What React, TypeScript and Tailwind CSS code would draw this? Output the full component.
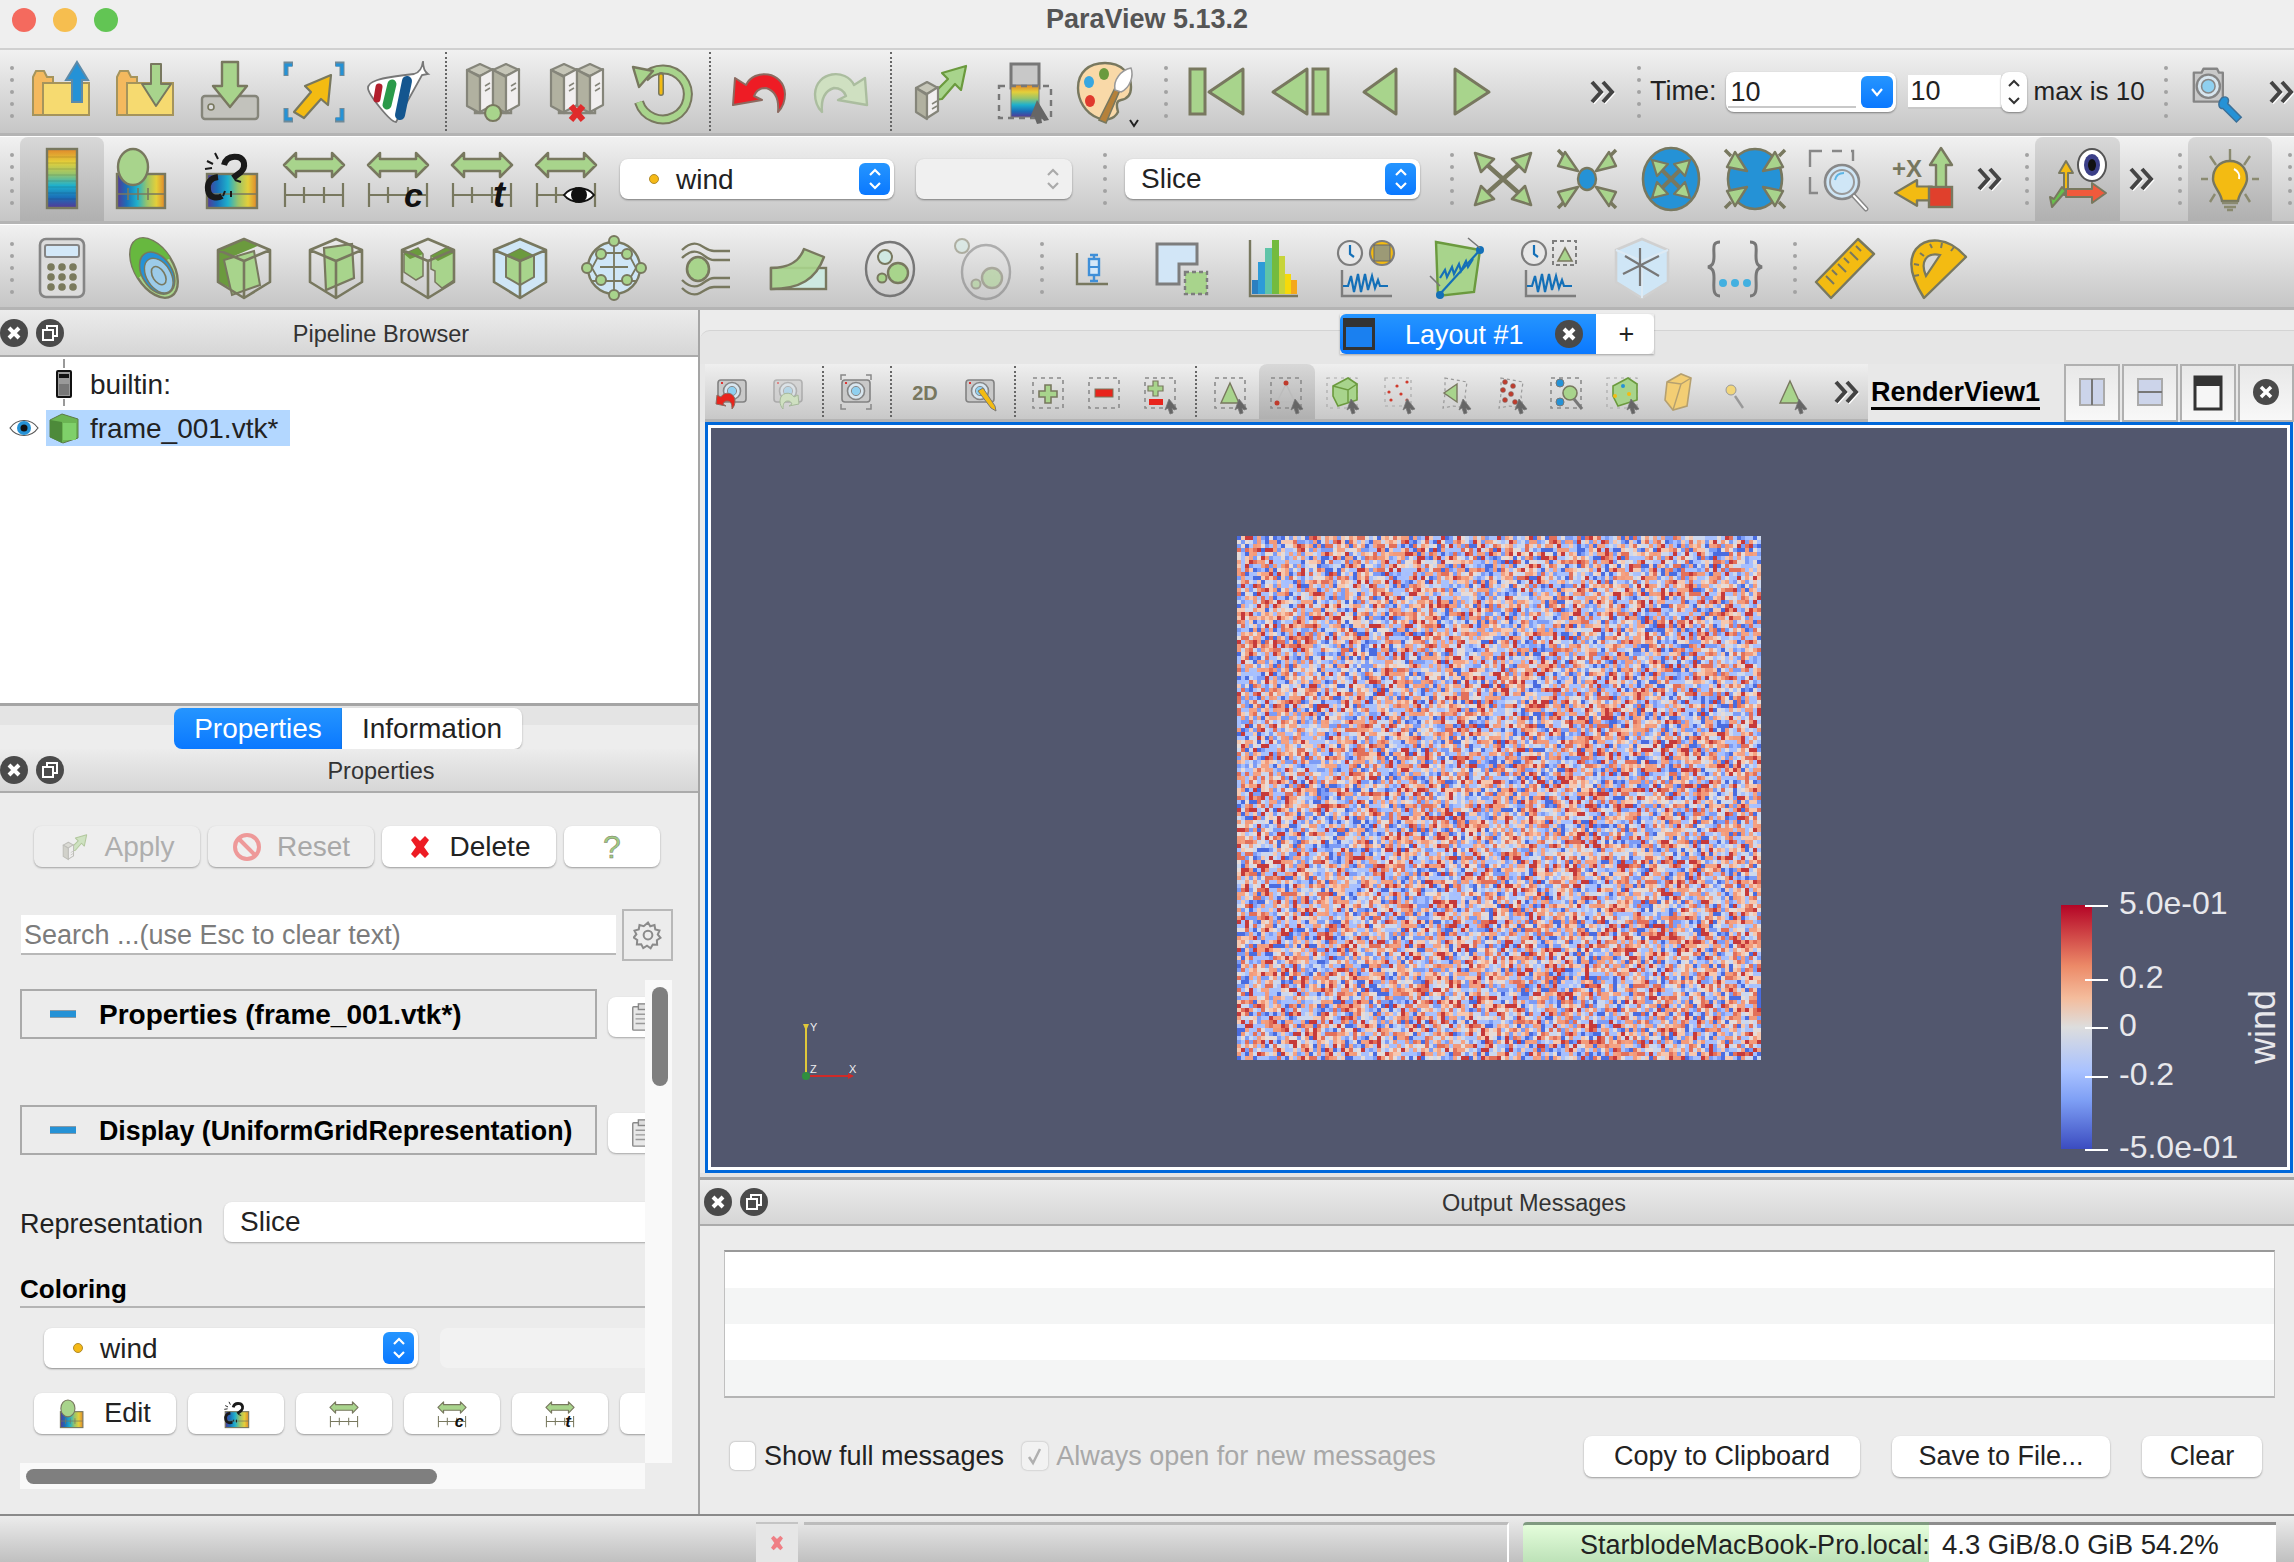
import { useMemo, type ReactNode } from "react";

const S = "#78785f";
const G = "#a8d48c";
const DG = "#6b9a3e";
const B = "#2592d6";
const Y = "#f3bb12";

function Tower({ x, y, h = 36, w = 13 }: { x: number; y: number; h?: number; w?: number }) {
  return (
    <g stroke="#85857a" strokeWidth="2.2" strokeLinejoin="round">
      <path d={`M${x} ${y + 6}l${w}-6 ${w} 6-${w} 6z`} fill="#c6c6b8" />
      <path d={`M${x} ${y + 6}v${h}l${w} 7v-${h}z`} fill="#b1b1a0" />
      <path d={`M${x + w} ${y + 12}v${h}l${w}-7v-${h}z`} fill="#f1efef" />
      <path d={`M${x + w + 5} ${y + 22}l5-3M${x + w + 5} ${y + 27}l5-3`} strokeWidth="1.5" />
    </g>
  );
}

const RangeBar = ({ children }: { children?: ReactNode }) => (
  <>
    <path d="M2 18 14 6v6h36V6l12 12-12 12v-6H14v6z" fill={G} stroke={S} strokeWidth="2.5" strokeLinejoin="round" />
    <path d="M3 36v24M61 36v24M3 48h58M22 40v16M42 40v16" fill="none" stroke={S} strokeWidth="2.2" />
    {children}
  </>
);

const Hex = ({ children }: { children?: ReactNode }) => (
  <>
    {children}
    <path d="M4 14 30 3l26 11v32L30 62 4 46zM4 14l26 11 26-11M30 25v37" fill="none" stroke={S} strokeWidth="2.6" strokeLinejoin="round" />
  </>
);

const Camera = ({ o = 1 }: { o?: number }) => (
  <g opacity={o}>
    <rect x="5" y="8" width="28" height="22" rx="3" fill="#c9c9c9" stroke="#828282" strokeWidth="1.6" />
    <circle cx="19" cy="19" r="8.5" fill="#d8e6ef" stroke="#858585" strokeWidth="1.6" />
    <circle cx="19" cy="19" r="4.6" fill="#8fd0f0" stroke="#8a8a8a" />
    <rect x="8" y="10" width="2" height="2" fill="#d33" />
  </g>
);

const Dash = () => <rect x="4" y="6" width="30" height="30" fill="none" stroke="#8b8b8b" strokeWidth="1.6" strokeDasharray="4 4" />;
const Cursor = () => <path d="M28 27l8 10-3 1-2-2 1 5-3 1-2-6-3 2z" fill="#666" stroke="#777" strokeWidth=".8" />;

const big: Record<string, ReactNode> = {
  folderUp: (
    <>
      <path d="M3 55V17l3-6h8l3 6h6v38z" fill="#f4b95e" stroke="#a5945c" strokeWidth="2" />
      <rect x="13" y="23" width="46" height="32" fill="#f6da70" stroke="#a5945c" strokeWidth="2" />
      <path d="M47 2l11 18h-6v22h-10V20h-6z" fill={B} stroke="#5d8aa8" strokeWidth="2" />
    </>
  ),
  folderDown: (
    <>
      <path d="M3 55V17l3-6h8l3 6h6v38z" fill="#f4b95e" stroke="#a5945c" strokeWidth="2" />
      <rect x="13" y="23" width="46" height="32" fill="#f6da70" stroke="#a5945c" strokeWidth="2" />
      <path d="M37 4h10v20h10L42 46 28 24h9z" fill={G} stroke={S} strokeWidth="2" strokeLinejoin="round" />
    </>
  ),
  save: (
    <>
      <rect x="4" y="36" width="56" height="23" rx="3" fill="#c2c2bc" stroke="#85857a" strokeWidth="2.4" />
      <circle cx="13" cy="47" r="3" fill="#ddd" stroke={S} strokeWidth="1.6" />
      <path d="M24 2h16v24h9L32 47 15 26h9z" fill={G} stroke={S} strokeWidth="2.4" strokeLinejoin="round" />
    </>
  ),
  connectArrow: (
    <>
      <path d="M4 16V4h7M60 16V4h-7M4 48v12h7M60 48v12h-7" fill="none" stroke="#708a98" strokeWidth="5" />
      <path d="M4 15V5h6M60 15V5h-6M4 49v10h6M60 49v10h-6" fill="none" stroke={B} strokeWidth="3" />
      <path d="M49 15 23 26l6 6-17 20 10 6 17-19 7 6z" fill={Y} stroke={S} strokeWidth="2.2" strokeLinejoin="round" />
    </>
  ),
  pvLogo: (
    <>
      <path d="M57 1c0 7 2 11 5 13l-6 1-26 47C24 62 2 34 2 28c0-6 8-10 46-14 4-1 8-4 9-13z" fill="#fff" stroke="#777" strokeWidth="1.8" />
      <path d="M13 27l-2 12" stroke="#b21f2d" strokeWidth="7" strokeLinecap="round" />
      <path d="M26 24l-5 21" stroke="#2a9a4a" strokeWidth="9" strokeLinecap="round" />
      <path d="M41 21l-7 34" stroke="#14568f" strokeWidth="10" strokeLinecap="round" />
    </>
  ),
  serverOn: (
    <>
      <path d="M14 44v9h36v-9" fill="none" stroke="#85857a" strokeWidth="2.4" />
      <Tower x={6} y={4} />
      <Tower x={32} y={4} />
      <circle cx="32" cy="53" r="8" fill={G} stroke={S} strokeWidth="2.2" />
    </>
  ),
  serverOff: (
    <>
      <path d="M14 44v9h36v-9" fill="none" stroke="#85857a" strokeWidth="2.4" />
      <Tower x={6} y={4} />
      <Tower x={32} y={4} />
      <path d="M26 46l12 14M38 46 26 60" stroke="#e02b2b" strokeWidth="6" />
    </>
  ),
  recover: (
    <>
      <path d="M15 18A25 25 0 1 1 10 42" fill="none" stroke={S} strokeWidth="10" />
      <path d="M15 18A25 25 0 1 1 10 42" fill="none" stroke={G} strokeWidth="6" />
      <path d="M4 7l20 4-14 16z" fill={G} stroke={S} strokeWidth="2.4" strokeLinejoin="round" />
      <path d="M32 15v18" stroke={S} strokeWidth="6" strokeLinecap="round" />
      <path d="M32 16v17" stroke={Y} strokeWidth="3" strokeLinecap="round" />
    </>
  ),
  undo: <path d="M7 45 9 18l11 7c8-17 38-14 39 9 0 8-3 14-7 18 1-11-2-21-12-24-6 0-10 3-12 8l8 4z" fill="#ee1c25" stroke="#8c6a60" strokeWidth="2" strokeLinejoin="round" />,
  redo: <path d="M57 45 55 18l-11 7C36 8 6 11 5 34c0 8 3 14 7 18-1-11 2-21 12-24 6 0 10 3 12 8l-8 4z" fill="#cfe0c1" stroke="#abbd9f" strokeWidth="2.4" strokeLinejoin="round" />,
  output: (
    <>
      <path d="M27 33 41 19l-6-6 24-7-5 24-6-6-13 15-8 1z" fill={G} stroke={DG} strokeWidth="2.2" strokeLinejoin="round" />
      <Tower x={9} y={22} h={24} w={11} />
    </>
  ),
  colorPick: (
    <>
      <rect x="20" y="4" width="28" height="24" fill="#c8c8c8" stroke="#777" strokeWidth="3" />
      <rect x="20" y="25" width="28" height="32" fill="url(#rbV)" stroke="#777" strokeWidth="1" />
      <rect x="8" y="26" width="52" height="32" fill="none" stroke="#777" strokeWidth="2.4" strokeDasharray="6 5" />
      <path d="M46 40l12 20-5 1-3-4 1 6-5 1-3-8-4 2z" fill="#666" />
    </>
  ),
  palette: (
    <>
      <path d="M30 3c16 0 26 10 26 24 0 8-4 12-10 13s-4 8-3 12c-4 8-14 9-20 6C10 53 3 40 3 28 3 12 14 3 30 3z" fill="#f9d9a8" stroke={S} strokeWidth="2.4" />
      <ellipse cx="14" cy="22" rx="5" ry="6" fill="#38a7e0" />
      <ellipse cx="29" cy="14" rx="5" ry="6" fill="#6a9a3e" />
      <ellipse cx="15" cy="41" rx="5" ry="6" fill="#e03a2d" />
      <path d="M24 60l16-32 5 2-14 33z" fill="#b5813a" stroke={S} strokeWidth="1.6" />
      <path d="M40 30c-2-10 6-20 16-22 3 8-1 20-10 24z" fill="#fff" stroke="#999" strokeWidth="1.5" />
      <path d="M55 60l4 6 4-6" fill="none" stroke="#222" strokeWidth="2" />
    </>
  ),
  first: (
    <>
      <rect x="5" y="9" width="15" height="45" fill={G} stroke={S} strokeWidth="3" />
      <path d="M58 9v45L24 32z" fill={G} stroke={S} strokeWidth="3" strokeLinejoin="round" />
    </>
  ),
  prevBar: (
    <>
      <path d="M38 9v45L4 32z" fill={G} stroke={S} strokeWidth="3" strokeLinejoin="round" />
      <rect x="44" y="9" width="15" height="45" fill={G} stroke={S} strokeWidth="3" />
    </>
  ),
  prev: <path d="M43 9v45L11 32z" fill={G} stroke={S} strokeWidth="3" strokeLinejoin="round" />,
  play: <path d="M18 9v45l34-22z" fill={G} stroke={S} strokeWidth="3" strokeLinejoin="round" />,
  shot: (
    <>
      <path d="M7 12h8l2-4h14l2 4h4v30H7z" fill="#c9c9c9" stroke="#858585" strokeWidth="2.4" strokeLinejoin="round" />
      <circle cx="22" cy="26" r="12" fill="#d8e6ef" stroke="#858585" strokeWidth="2.4" />
      <circle cx="22" cy="26" r="7" fill="#8fd0f0" stroke="#888" strokeWidth="1.6" />
      <path d="M36 38c6-3 8 2 6 6l14 14-5 5-14-14c-3 1-7-4-1-11z" fill={B} stroke="#3c7098" strokeWidth="1.5" />
    </>
  ),
  cbar: (
    <>
      <rect x="17" y="2" width="30" height="59" fill="url(#rbV)" stroke={S} strokeWidth="2.4" />
      <path d="M18 10h28M18 16h28M18 22h28M18 28h28M18 34h28M18 40h28M18 46h28M18 52h28" stroke="#0002" strokeWidth="1" />
    </>
  ),
  cedit: (
    <>
      <rect x="3" y="27" width="48" height="34" fill="url(#rbH)" stroke={S} strokeWidth="2.4" />
      <path d="M3 47h48M14 41v12M24 41v12M34 41v12" stroke={S} strokeWidth="1.6" />
      <ellipse cx="19" cy="20" rx="15" ry="18" fill={G} stroke={S} strokeWidth="2.4" />
    </>
  ),
  cunlink: (
    <>
      <rect x="9" y="27" width="50" height="34" fill="url(#rbH)" stroke={S} strokeWidth="2.4" />
      <path d="M9 47h50" stroke={S} strokeWidth="1.6" />
      <path d="M20 30c-8 1-11 6-10 13 1 8 9 9 14 6M26 18c2-8 8-9 14-8 7 2 8 10 3 15l-8 6" fill="none" stroke="#1a1a1a" strokeWidth="6" />
      <path d="M17 6l3 6M9 14l6 3M7 22l7-1M37 33l6 2M33 44v6M27 44l-2 5" stroke="#1a1a1a" strokeWidth="2" />
    </>
  ),
  range: <RangeBar />,
  rangeC: (
    <RangeBar>
      <text x="38" y="60" fontFamily="Liberation Sans, sans-serif" fontSize="34" fontWeight="700" fontStyle="italic" fill="#111">c</text>
    </RangeBar>
  ),
  rangeT: (
    <RangeBar>
      <text x="43" y="60" fontFamily="Liberation Sans, sans-serif" fontSize="36" fontWeight="700" fontStyle="italic" fill="#111">t</text>
    </RangeBar>
  ),
  rangeE: (
    <RangeBar>
      <path d="M30 48c7-9 23-9 30 0-7 9-23 9-30 0z" fill="#fff" stroke="#111" strokeWidth="2" />
      <circle cx="45" cy="48" r="8" fill="#111" />
    </RangeBar>
  ),
  rs1: (
    <>
      <path d="M14 16l36 32M50 16 14 48" stroke={S} strokeWidth="4.5" />
      <g fill={G} stroke={S} strokeWidth="2.5" strokeLinejoin="round">
        <path d="M4 6l19 6-13 13zM60 6 41 12l13 13zM4 58l19-6-13-13zM60 58 41 52l13-13z" />
      </g>
    </>
  ),
  rs2: (
    <>
      <path d="M3 3l6 6M61 3l-6 6M3 61l6-6M61 61l-6-6" stroke={S} strokeWidth="3.5" />
      <ellipse cx="32" cy="32" rx="9" ry="11" fill={B} stroke={S} strokeWidth="2.4" />
      <g fill={G} stroke={S} strokeWidth="2.4" strokeLinejoin="round">
        <path d="M23 24 10 5 3 19zM41 24 54 5l7 14zM23 40 10 59 3 45zM41 40l13 19 7-14z" />
      </g>
    </>
  ),
  rs3: (
    <>
      <ellipse cx="32" cy="32" rx="28" ry="31" fill={B} stroke={S} strokeWidth="2.6" />
      <path d="M20 20l24 24M44 20 20 44" stroke={S} strokeWidth="4" />
      <g fill={G} stroke={S} strokeWidth="2.2" strokeLinejoin="round">
        <path d="M13 13l16 4-11 12zM51 13l-16 4 11 12zM13 51l16-4-11-12zM51 51l-16-4 11-12z" />
      </g>
    </>
  ),
  rs4: (
    <>
      <ellipse cx="32" cy="32" rx="27" ry="30" fill={B} stroke={S} strokeWidth="2.6" />
      <path d="M2 3l6 6M62 3l-6 6M2 61l6-6M62 61l-6-6" stroke={S} strokeWidth="3.5" />
      <g fill={G} stroke={S} strokeWidth="2.4" strokeLinejoin="round">
        <path d="M24 24 12 5 4 20zM40 24 52 5l8 15zM24 40 12 59 4 44zM40 40l12 19 8-15z" />
      </g>
    </>
  ),
  zoomBox: (
    <>
      <path d="M3 20V4h12M25 4h10M44 4h2v10M3 30v16h8" fill="none" stroke="#888" strokeWidth="2.4" />
      <circle cx="35" cy="35" r="17" fill="#cfe6f6" stroke="#888" strokeWidth="2.6" />
      <circle cx="35" cy="35" r="12" fill="#cfe6f6" stroke="#999" strokeWidth="2" />
      <path d="M28 33c1-5 5-7 9-7" fill="none" stroke="#5db5e5" strokeWidth="2" />
      <path d="M47 49l12 13" stroke="#888" strokeWidth="5" strokeLinecap="round" />
      <path d="M47 49l12 13" stroke="#fff" strokeWidth="2" strokeLinecap="round" />
    </>
  ),
  axes: (
    <>
      <text x="1" y="30" fontFamily="Liberation Sans, sans-serif" fontSize="24" fontWeight="700" fill="#77775f">+X</text>
      <path d="M45 41V18h-6L50 1l11 17h-6v23z" fill={G} stroke={S} strokeWidth="2.4" strokeLinejoin="round" />
      <path d="M41 59H26v6L4 51l22-14v7h15z" fill={Y} stroke={S} strokeWidth="2.4" strokeLinejoin="round" transform="translate(0 -1) scale(1 .92)" />
      <rect x="38" y="40" width="23" height="20" fill="#e0402c" stroke={S} strokeWidth="2.4" />
    </>
  ),
  axesEye: (
    <>
      <path d="M18 48V26h-5l7-12 7 12h-5v22z" fill={Y} stroke={S} strokeWidth="2" strokeLinejoin="round" />
      <path d="M20 42h26v-6l14 10-14 10v-6H20z" fill="#f05a3c" stroke={S} strokeWidth="2" strokeLinejoin="round" />
      <path d="M20 44 6 60l-2-10 4 2 8-12z" fill="#68c04c" stroke={S} strokeWidth="2" strokeLinejoin="round" />
      <ellipse cx="46" cy="18" rx="14" ry="16" fill="#fff" stroke="#555" strokeWidth="2" />
      <ellipse cx="46" cy="18" rx="8" ry="11" fill="#3b3f88" />
      <ellipse cx="46" cy="18" rx="4" ry="6" fill="#111" />
    </>
  ),
  bulb: (
    <>
      <path d="M32 2v12M12 9l6 9M52 9l-6 9M3 32h7M54 32h7M12 55l5-8M52 55l-5-8" stroke="#8a8a70" strokeWidth="2.4" />
      <path d="M32 14c-11 0-17 8-17 18 0 8 8 13 9 22h16c1-9 9-14 9-22 0-10-6-18-17-18z" fill={Y} stroke={S} strokeWidth="2.4" />
      <path d="M24 56h16M26 60h12M29 63h6" stroke="#8a8a70" strokeWidth="2.4" />
      <path d="M36 22c4 2 6 6 5 10" stroke="#fff" strokeWidth="2" fill="none" />
    </>
  ),
  calc: (
    <>
      <rect x="10" y="3" width="44" height="58" rx="6" fill="#dcdcdc" stroke="#858585" strokeWidth="2.6" />
      <rect x="15" y="9" width="34" height="12" rx="2" fill="#d3e8f8" stroke="#858585" strokeWidth="2" />
      {[31, 41, 51].flatMap((cy) =>
        [21, 32, 43].map((cx) => <circle key={`${cx}${cy}`} cx={cx} cy={cy} r="3.8" fill="#7a7a5c" />),
      )}
    </>
  ),
  contour: (
    <g transform="rotate(-32 32 32)">
      <ellipse cx="32" cy="32" rx="19" ry="33" fill={G} stroke={S} strokeWidth="2.4" />
      <path d="M13 32C13 14 22-1 32-1s19 15 19 33z" fill="#67b83f" stroke="none" />
      <ellipse cx="32" cy="38" rx="15" ry="23" fill={B} stroke={S} strokeWidth="1.6" />
      <ellipse cx="32" cy="41" rx="12" ry="19" fill="#9ccbe9" stroke={S} strokeWidth="1.4" />
      <ellipse cx="32" cy="41" rx="6" ry="10" fill="none" stroke={S} strokeWidth="1.6" />
    </g>
  ),
  clip: (
    <Hex>
      <path d="M4 14 30 3l16 6-26 11 4 36-20-10z" fill={DG} />
      <path d="M10 24l30-9 6 34-28 10z" fill={G} stroke={S} strokeWidth="2" />
    </Hex>
  ),
  slice: (
    <Hex>
      <path d="M18 12l28-4 2 34-28 12z" fill={G} stroke={S} strokeWidth="2.2" />
    </Hex>
  ),
  extract: (
    <Hex>
      <path d="M6 18l14-6 5 6v22l-7 4-12-8z" fill={G} stroke={S} strokeWidth="1.5" />
      <path d="M33 20l17-9 6 6v27l-12 8-7-6V35l-4-2z" fill={G} stroke={S} strokeWidth="1.5" />
      <path d="M6 18l14-6 5 6-13 5zM33 20l17-9 6 6-16 8z" fill={DG} />
    </Hex>
  ),
  threshold: (
    <>
      <path d="M4 14 30 3l26 11v32L30 62 4 46z" fill="#cfe6f6" />
      <Hex>
        <path d="M16 20l14-7 14 7v21l-14 8-14-8z" fill={G} stroke={S} strokeWidth="2" />
        <path d="M16 20l14-7 14 7-14 6z" fill={DG} />
      </Hex>
    </>
  ),
  glyph: (
    <>
      <circle cx="32" cy="32" r="26" fill="#cfe6f6" stroke={S} strokeWidth="2.4" />
      <path d="M14 17h36M9 45h46M32 5v54M18 17 10 32l8 14M46 17l8 15-8 14M18 31h28" stroke={S} strokeWidth="1.8" fill="none" />
      {[[32, 5], [32, 59], [5, 32], [59, 32], [19, 18], [45, 18], [19, 44], [45, 44]].map(([x, y]) => (
        <circle key={`${x}-${y}`} cx={x} cy={y} r="5" fill={G} stroke={S} strokeWidth="2" />
      ))}
    </>
  ),
  stream: (
    <>
      <ellipse cx="24" cy="33" rx="11" ry="12" fill={G} stroke={S} strokeWidth="2.6" />
      <path d="M8 14C14 8 20 6 26 9S34 15 40 15H56M8 22C14 16 20 14 26 17S34 24 40 24H56M8 52C14 58 20 60 26 57S34 51 40 51H56M8 44C14 50 20 52 26 49S34 42 40 42H56" fill="none" stroke={S} strokeWidth="2.4" />
    </>
  ),
  warp: (
    <>
      <rect x="5" y="32" width="55" height="21" fill="#cde9e0" stroke={S} strokeWidth="2.4" />
      <path d="M5 32c18 0 28-6 33-19l20 8c-8 22-24 32-53 32z" fill={G} fillOpacity=".9" stroke={S} strokeWidth="2.4" strokeLinejoin="round" />
    </>
  ),
  group: (
    <>
      <ellipse cx="32" cy="33" rx="24" ry="27" fill="none" stroke="#777" strokeWidth="2.4" />
      <circle cx="27" cy="21" r="7" fill="#cfe9e2" stroke={S} strokeWidth="2" />
      <circle cx="40" cy="37" r="10" fill={G} stroke={S} strokeWidth="2.4" />
      <circle cx="24" cy="42" r="4.5" fill={G} stroke={S} strokeWidth="2" />
    </>
  ),
  ungroup: (
    <g opacity=".5">
      <ellipse cx="36" cy="36" rx="24" ry="27" fill="none" stroke="#777" strokeWidth="2.4" />
      <circle cx="12" cy="10" r="7" fill="#cfe9e2" stroke={S} strokeWidth="2" />
      <circle cx="42" cy="42" r="10" fill={G} stroke={S} strokeWidth="2.4" />
      <circle cx="26" cy="48" r="4.5" fill={G} stroke={S} strokeWidth="2" />
    </g>
  ),
  probe: (
    <>
      <path d="M17 17v31h31" fill="none" stroke={S} strokeWidth="2.4" />
      <path d="M34 19v26M30 19h8M30 45h8" stroke="#3f8fd8" strokeWidth="2.4" />
      <rect x="29" y="23" width="10" height="16" fill="#d5e8f8" stroke="#3f8fd8" strokeWidth="2.4" />
      <path d="M29 31h10" stroke="#3f8fd8" strokeWidth="2" />
    </>
  ),
  selectData: (
    <>
      <path d="M5 8h40v20H27v20H5z" fill="#d2e6f7" stroke="#7d7d7d" strokeWidth="3" />
      <rect x="33" y="36" width="22" height="22" fill={G} stroke="#7d7d7d" strokeWidth="2.4" strokeDasharray="4 3" />
    </>
  ),
  histo: (
    <>
      <rect x="8" y="44" width="6" height="14" fill="#2b7fc0" />
      <rect x="14" y="26" width="7" height="32" fill="#2d9bd8" />
      <rect x="21" y="12" width="7" height="46" fill="#5fc4a8" />
      <rect x="28" y="4" width="7" height="54" fill="#74bb3e" />
      <rect x="35" y="20" width="6" height="38" fill="#c7d43a" />
      <rect x="41" y="38" width="6" height="20" fill="#f6d90a" />
      <rect x="47" y="44" width="6" height="14" fill="#f4a81c" />
      <path d="M6 4v56h48" fill="none" stroke={S} strokeWidth="2.4" />
    </>
  ),
  timePlot: (
    <>
      <circle cx="14" cy="17" r="12" fill="#e8e8e8" stroke="#7d7d7d" strokeWidth="2.2" />
      <path d="M14 9v9l4 3" fill="none" stroke="#1470b8" strokeWidth="2.2" />
      <circle cx="46" cy="17" r="12" fill={Y} stroke="#7d7d7d" strokeWidth="2.2" />
      <rect x="38" y="9" width="16" height="16" fill="#9c9a76" stroke="#666" />
      <path d="M6 34v26h50" fill="none" stroke="#7d7d7d" strokeWidth="2.4" />
      <path d="M7 50h5l3-10 3 16 4-18 3 18 4-18 3 16 4-14 3 12 3-8 2 6h8" fill="none" stroke="#1470b8" strokeWidth="2.2" />
    </>
  ),
  plotLine: (
    <>
      <path d="M8 6 52 14 46 56 10 60z" fill={G} stroke={DG} strokeWidth="2.4" />
      <path d="M12 58 52 14" stroke="#1470b8" strokeWidth="2.2" />
      <circle cx="52" cy="14" r="4" fill="#1470b8" />
      <circle cx="12" cy="59" r="4" fill="#1470b8" />
      <path d="M40 2l12 10M2 40l10 10" stroke="#777" strokeWidth="1.6" />
      <path d="M12 42l5-8 2 7 5-10 2 7 5-10 2 7 5-10 2 6 5-8" fill="none" stroke="#1470b8" strokeWidth="2.2" />
    </>
  ),
  timeSel: (
    <>
      <circle cx="14" cy="17" r="12" fill="#e8e8e8" stroke="#7d7d7d" strokeWidth="2.2" />
      <path d="M14 9v9l4 3" fill="none" stroke="#1470b8" strokeWidth="2.2" />
      <rect x="33" y="5" width="23" height="24" fill="none" stroke="#7d7d7d" strokeWidth="2" strokeDasharray="4 3" />
      <path d="M38 25l7-13 7 13z" fill={G} stroke={S} strokeWidth="1.6" />
      <path d="M6 34v26h50" fill="none" stroke="#7d7d7d" strokeWidth="2.4" />
      <path d="M7 50h5l3-10 3 16 4-18 3 18 4-18 3 16 4-14 3 12 3-8 2 6h8" fill="none" stroke="#1470b8" strokeWidth="2.2" />
    </>
  ),
  find: (
    <>
      <path d="M4 14 30 3l26 11v32L30 62 4 46z" fill="#cfe6f6" stroke="#d0d0d0" strokeWidth="2.6" />
      <path d="M30 25v37M4 14l26 11 26-11" stroke="#ddeaf4" strokeWidth="2" fill="none" />
      <path d="M28 12v38M11 38l36-18M13 20l34 20" stroke="#777" strokeWidth="2.2" />
    </>
  ),
  braces: (
    <>
      <path d="M16 6c-8 0-6 6-6 14s-2 10-6 11c4 1 6 3 6 11s-2 18 6 18M46 6c8 0 6 6 6 14s2 10 6 11c-4 1-6 3-6 11s2 18-6 18" fill="none" stroke="#777" strokeWidth="3" />
      <circle cx="19" cy="47" r="4" fill="#42b0e0" />
      <circle cx="31" cy="47" r="4" fill="#42b0e0" />
      <circle cx="43" cy="47" r="4" fill="#42b0e0" />
    </>
  ),
  ruler: (
    <>
      <path d="M44 3 60 18 17 62 2 46z" fill={Y} stroke={S} strokeWidth="2.4" strokeLinejoin="round" />
      <path d="M42 10l5 5M36 16l8 8M30 22l5 5M24 28l8 8M18 34l5 5M12 40l8 8" stroke={S} strokeWidth="2" />
    </>
  ),
  protractor: (
    <>
      <path d="M18 62C4 40 2 24 10 13 20 1 42 0 60 21z" fill={Y} stroke={S} strokeWidth="2.4" strokeLinejoin="round" />
      <path d="M20 40c-6-14 0-24 14-21z" fill="#d8d8d8" stroke={S} strokeWidth="2.2" />
      <path d="M8 28l5 1M8 40l5-1M14 17l4 3M24 8l2 4M36 7l-1 5M48 11l-3 4" stroke={S} strokeWidth="2" />
    </>
  ),
  clipboard: (
    <>
      <rect x="8" y="10" width="40" height="50" rx="2" fill="#e8e8e8" stroke="#888" strokeWidth="3" />
      <rect x="20" y="4" width="16" height="12" fill="#ddd" stroke="#888" strokeWidth="3" />
      <path d="M14 26h28M14 36h28M14 46h28" stroke="#999" strokeWidth="3" />
    </>
  ),
};

const small: Record<string, ReactNode> = {
  camUndo: (
    <>
      <Camera />
      <path d="M3 32l1-9 4 2c3-6 14-5 14 4 0 3-1 6-3 8 0-5-1-8-5-8-2 0-3 1-4 3l3 2z" fill="#e8241c" stroke="#8c6a60" />
    </>
  ),
  camRedo: (
    <>
      <Camera o={0.5} />
      <path d="M30 32l-1-9-4 2c-3-6-14-5-14 4 0 3 1 6 3 8 0-5 1-8 5-8 2 0 3 1 4 3l-3 2z" fill="#cfe0c1" stroke="#a5b89a" />
    </>
  ),
  camBox: (
    <>
      <path d="M4 8V3h5M34 8V3h-5M4 32v5h5M34 32v5h-5" fill="none" stroke="#888" strokeWidth="1.5" />
      <Camera />
    </>
  ),
  twoD: (
    <text x="20" y="28" textAnchor="middle" fontFamily="Liberation Sans, sans-serif" fontWeight="700" fontSize="20" fill="#77775f">2D</text>
  ),
  camPen: (
    <>
      <Camera />
      <path d="M17 19l5-3 12 18 1 5-5-3z" fill={Y} stroke="#777" strokeWidth="1" />
    </>
  ),
  addSel: (
    <>
      <Dash />
      <path d="M16 13h6v6h6v6h-6v6h-6v-6h-6v-6h6z" fill={G} stroke={S} strokeWidth="1.6" />
    </>
  ),
  subSel: (
    <>
      <Dash />
      <rect x="10" y="17" width="18" height="8" fill="#e8241c" stroke={S} strokeWidth="1" />
    </>
  ),
  addSubSel: (
    <>
      <Dash />
      <path d="M12 9h5v5h5v5h-5v5h-5v-5H7v-5h5z" fill={G} stroke={S} strokeWidth="1.2" />
      <rect x="8" y="27" width="14" height="6" fill="#e8241c" />
      <Cursor />
    </>
  ),
  selCell: (
    <>
      <Dash />
      <path d="M19 11l9 20H10z" fill={G} stroke={S} strokeWidth="1.4" />
      <Cursor />
    </>
  ),
  selPoint: (
    <>
      <Dash />
      <path d="M19 12 10 30h18z" fill="none" stroke="#bbb" strokeWidth="1.4" />
      <circle cx="19" cy="11" r="2.5" fill="#bf3b2c" />
      <circle cx="10" cy="31" r="2.5" fill="#bf3b2c" />
      <Cursor />
    </>
  ),
  frust: (
    <>
      <rect x="4" y="6" width="30" height="30" fill="none" stroke="#aaa" strokeWidth="1.2" strokeDasharray="3 4" />
      <path d="M10 14l15-8 9 6v16l-19 6-5-10z" fill={G} stroke={DG} strokeWidth="1.6" />
      <path d="M10 14l15 4 9-6M25 18v12" fill="none" stroke={DG} strokeWidth="1.4" />
      <Cursor />
    </>
  ),
  frustPts: (
    <>
      <rect x="6" y="6" width="26" height="28" fill="none" stroke="#aaa" strokeWidth="1.2" strokeDasharray="3 4" />
      <g fill="#d03a2c">
        <circle cx="10" cy="20" r="1.6" /><circle cx="18" cy="14" r="1.6" /><circle cx="28" cy="10" r="1.6" /><circle cx="12" cy="28" r="1.6" /><circle cx="22" cy="22" r="1.6" /><circle cx="28" cy="28" r="1.6" />
      </g>
      <Cursor />
    </>
  ),
  polyCell: (
    <>
      <path d="M10 6l22 4-2 14 2 12-14-2-10 2 2-14z" fill="none" stroke="#999" strokeWidth="1.2" strokeDasharray="3 3" />
      <path d="M22 12v18L9 21z" fill={G} stroke={S} strokeWidth="1.4" />
      <Cursor />
    </>
  ),
  polyPts: (
    <>
      <path d="M10 6l22 4-2 14 2 12-14-2-10 2 2-14z" fill="none" stroke="#999" strokeWidth="1.2" strokeDasharray="3 3" />
      <g fill="#bf3b2c" stroke="#777" strokeWidth=".5">
        <circle cx="14" cy="10" r="2.5" /><circle cx="22" cy="14" r="2.5" /><circle cx="12" cy="18" r="2.5" /><circle cx="20" cy="22" r="2.5" /><circle cx="14" cy="28" r="2.5" /><circle cx="24" cy="30" r="2.5" />
      </g>
      <Cursor />
    </>
  ),
  interactive: (
    <>
      <Dash />
      <circle cx="13" cy="11" r="4" fill={B} stroke="#777" />
      <circle cx="13" cy="30" r="4" fill={B} stroke="#777" />
      <circle cx="23" cy="21" r="7" fill={G} stroke={S} strokeWidth="1.6" />
      <path d="M27 27l8 10" stroke="#777" strokeWidth="3" />
    </>
  ),
  frustBlock: (
    <>
      <rect x="4" y="6" width="30" height="30" fill="none" stroke="#aaa" strokeWidth="1.2" strokeDasharray="3 4" />
      <path d="M10 14l15-8 9 6v16l-19 6-5-10z" fill={G} stroke={DG} strokeWidth="1.6" />
      <circle cx="12" cy="24" r="2" fill={Y} /><circle cx="20" cy="14" r="2" fill={B} /><circle cx="26" cy="22" r="2" fill={Y} />
      <Cursor />
    </>
  ),
  block: (
    <>
      <path d="M8 10l14-8 10 4-4 28-14 4-8-10z" fill="#f3ce74" stroke="#b5a070" strokeWidth="1.6" />
      <path d="M8 10l14 2 10-6M22 12l-8 26" fill="none" stroke="#b5a070" strokeWidth="1.4" />
    </>
  ),
  pointHover: (
    <>
      <circle cx="16" cy="18" r="5" fill="#f2d67a" stroke="#999" />
      <path d="M20 24l8 12" stroke="#999" strokeWidth="2.4" />
    </>
  ),
  cellHover: (
    <>
      <path d="M19 9l10 22H9z" fill={G} stroke={S} strokeWidth="1.4" />
      <Cursor />
    </>
  ),
};

function Ic({ n, s = 64 }: { n: string; s?: number }) {
  const isSmall = n in small;
  const vb = isSmall ? 40 : 64;
  return (
    <svg width={s} height={s} viewBox={`0 0 ${vb} ${vb}`} className="block overflow-visible">
      {isSmall ? small[n] : big[n]}
    </svg>
  );
}

function Dots({ className = "" }: { className?: string }) {
  return (
    <div className={`flex h-full w-2 shrink-0 flex-col items-center justify-center gap-[8px] ${className}`}>
      {[0, 1, 2, 3, 4].map((i) => (
        <span key={i} className="h-[4px] w-[4px] rounded-full bg-[#a2a2a2]" />
      ))}
    </div>
  );
}

function Line({ w }: { w: string }) {
  return (
    <div className={`flex h-full shrink-0 justify-center py-[2px] ${w}`}>
      <div className="h-full border-l-2 border-dotted border-[#666]" />
    </div>
  );
}

function Chevrons({ className = "" }: { className?: string }) {
  return (
    <svg width="30" height="26" viewBox="0 0 30 26" className={`shrink-0 ${className}`}>
      <path d="M4 3l9 10-9 10M15 3l9 10-9 10" fill="none" stroke="#fff" strokeWidth="4" transform="translate(1 1)" />
      <path d="M4 3l9 10-9 10M15 3l9 10-9 10" fill="none" stroke="#444" strokeWidth="4" />
    </svg>
  );
}

function Tool({ n, w = "w-[84px]", active = false, size = 64 }: { n: string; w?: string; active?: boolean; size?: number }) {
  return (
    <div
      className={`flex h-full shrink-0 items-center justify-center ${w} ${
        active ? "rounded-t-[8px] bg-gradient-to-b from-[#d8d8d8] to-[#b0b0b0]" : ""
      }`}
    >
      <Ic n={n} s={size} />
    </div>
  );
}

function Stepper({ disabled = false, down = false }: { disabled?: boolean; down?: boolean }) {
  return (
    <div
      className={`flex shrink-0 items-center justify-center rounded-[6px] ${
        disabled ? "" : "bg-gradient-to-b from-[#2595ff] to-[#0a78ff]"
      } ${down ? "h-[32px] w-[32px]" : "h-[32px] w-[31px]"}`}
    >
      <svg width="16" height="26" viewBox="0 0 16 26">
        {!down && <path d="M3 9l5-5 5 5" fill="none" stroke={disabled ? "#aaa" : "#fff"} strokeWidth="2.2" />}
        <path d={down ? "M3 10l5 6 5-6" : "M3 17l5 5 5-5"} fill="none" stroke={disabled ? "#aaa" : "#fff"} strokeWidth="2.2" />
      </svg>
    </div>
  );
}

function Combo({ w, children, disabled = false }: { w: string; children?: ReactNode; disabled?: boolean }) {
  return (
    <div
      className={`flex h-[40px] shrink-0 items-center justify-between rounded-[8px] pr-[4px] text-[28px] text-[#222] shadow-[0_1px_2px_rgba(0,0,0,.4)] ${w} ${
        disabled ? "bg-[#f0f0f0]" : "bg-white"
      }`}
    >
      <div className="flex items-center">{children}</div>
      <Stepper disabled={disabled} />
    </div>
  );
}

function WindLabel() {
  return (
    <>
      <span className="ml-[29px] h-[10px] w-[10px] rounded-full border border-[#b08a2a] bg-[#f5b916]" />
      <span className="ml-[17px] translate-y-[1px]">wind</span>
    </>
  );
}

function DockButtons() {
  return (
    <div className="flex shrink-0 items-center gap-[8px]">
      <svg width="28" height="28" viewBox="0 0 28 28">
        <circle cx="14" cy="14" r="14" fill="#4a4a4a" />
        <path d="M9 9l10 10M19 9 9 19" stroke="#fff" strokeWidth="4" />
      </svg>
      <svg width="28" height="28" viewBox="0 0 28 28">
        <circle cx="14" cy="14" r="14" fill="#4a4a4a" />
        <rect x="7" y="11" width="10" height="10" fill="none" stroke="#fff" strokeWidth="2" />
        <path d="M11 10V7h10v10h-3" fill="none" stroke="#fff" strokeWidth="2" />
      </svg>
    </div>
  );
}

function DockHeader({ title, h, left = "", titleClass = "" }: { title: string; h: string; left?: string; titleClass?: string }) {
  return (
    <div className={`flex shrink-0 items-center border-b-2 border-[#ababab] bg-gradient-to-b from-[#ececec] to-[#d6d6d6] ${h} ${left}`}>
      <DockButtons />
      <div className={`flex-1 translate-y-[2px] text-center text-[23.5px] text-[#333] ${titleClass}`}>{title}</div>
    </div>
  );
}

function Btn({ w, children, disabled = false, className = "" }: { w: string; children?: ReactNode; disabled?: boolean; className?: string }) {
  return (
    <div
      className={`flex h-[41px] shrink-0 items-center justify-center rounded-[8px] text-[27px] shadow-[0_1px_2px_rgba(0,0,0,.35)] ${w} ${
        disabled ? "bg-[#efefef] text-[#a8a8a8]" : "bg-white text-[#222]"
      } ${className}`}
    >
      {children}
    </div>
  );
}

function Section({ title, size }: { title: string; size: string }) {
  return (
    <div className="flex items-start">
      <div className="flex h-[50px] w-[577px] shrink-0 items-center border-2 border-[#aaaaaa] pl-[28px]">
        <span className="h-[8px] w-[26px] shrink-0 border-y border-[#8a9aa5] bg-[#2592d6]" />
        <div className="ml-[23px] w-[474px] overflow-hidden">
          <span className={`block translate-y-[1px] whitespace-nowrap font-bold text-black ${size}`}>{title}</span>
        </div>
      </div>
      <div className="ml-[11px] mt-[8px] flex h-[40px] w-[60px] items-center rounded-[8px] bg-white pl-[21px] shadow-[0_1px_2px_rgba(0,0,0,.3)]">
        <Ic n="clipboard" s={30} />
      </div>
    </div>
  );
}

const sliceColors = ["#4a6ce0", "#7c9cf6", "#a6bfff", "#a9c2fc", "#cdd8ee", "#e6dcd8", "#f6c8b0", "#f4a283", "#f29a7a", "#e2705a", "#c63a3a"];

function SliceImage() {
  const paths = useMemo(() => {
    const out = sliceColors.map(() => "");
    let seed = 20240613;
    for (let y = 0; y < 131; y++) {
      for (let x = 0; x < 131; x++) {
        seed = (seed * 1664525 + 1013904223) >>> 0;
        const v = (seed >>> 16) % sliceColors.length;
        out[v] += `M${x} ${y}h1v1h-1z`;
      }
    }
    return out;
  }, []);
  return (
    <svg width="524" height="524" viewBox="0 0 131 131" shapeRendering="crispEdges" className="block">
      {paths.map((d, i) => (
        <path key={i} d={d} fill={sliceColors[i]} />
      ))}
    </svg>
  );
}

function ScalarBar() {
  const ticks = [
    { label: "5.0e-01", y: 905 },
    { label: "0.2", y: 979 },
    { label: "0", y: 1027 },
    { label: "-0.2", y: 1076 },
    { label: "-5.0e-01", y: 1149 },
  ];
  return (
    <>
      <div className="absolute left-[1350px] top-[477px] h-[244px] w-[31px] bg-[linear-gradient(to_bottom,#b40426_0%,#ec8a68_25%,#f4bc9c_38%,#dddddd_50%,#a9c2ff_68%,#7e9ff5_80%,#3b4cc0_100%)]" />
      {ticks.map((t) => (
        <div key={t.label} className="absolute left-[1374px] flex items-center" style={{ top: t.y - 428 }}>
          <div className="h-[1.5px] w-[23px] bg-white" />
          <span className="absolute left-[34px] -translate-y-[3px] whitespace-nowrap text-[32px] leading-none text-[#e8e8ec]">{t.label}</span>
        </div>
      ))}
      <div className="absolute left-[1534px] top-[562px] rotate-180 text-[36px] leading-none text-[#e8e8ec] [writing-mode:vertical-rl]">wind</div>
    </>
  );
}

function Axes() {
  return (
    <svg width="80" height="70" viewBox="0 0 80 70" className="absolute left-[85px] top-[592px]">
      <path d="M10 56V7" stroke="#e0c83a" strokeWidth="2" />
      <path d="M10 56h42" stroke="#d02a28" strokeWidth="2" />
      <path d="M7 4l3 7 3-7z" fill="#e0c83a" />
      <path d="M52 53l6 3-6 3z" fill="#d02a28" />
      <circle cx="10" cy="56" r="4" fill="#2f8f3f" />
      <g fontFamily="Liberation Sans, sans-serif" fontSize="11" fill="#eee">
        <text x="14" y="11">Y</text>
        <text x="53" y="53">X</text>
        <text x="14" y="53">Z</text>
      </g>
    </svg>
  );
}

const rowGrad = "bg-gradient-to-b from-[#f1f1f1] to-[#c6c6c6] border-b-[3px] border-b-[#b4b4b4]";

export default function App() {
  return (
    <div className="relative flex h-[1562px] w-[2294px] flex-col overflow-hidden bg-[#ececec] font-['Liberation_Sans',Arial,sans-serif] text-[#222]">
      <svg width="0" height="0" className="absolute">
        <defs>
          <linearGradient id="rbV" x1="0" y1="0" x2="0" y2="1">
            <stop offset="0" stopColor="#e0872a" />
            <stop offset=".22" stopColor="#e4cf3a" />
            <stop offset=".42" stopColor="#97c46b" />
            <stop offset=".62" stopColor="#1fb0cc" />
            <stop offset=".82" stopColor="#1a6fb8" />
            <stop offset="1" stopColor="#563896" />
          </linearGradient>
          <linearGradient id="rbH" x1="0" y1="0" x2="1" y2="0">
            <stop offset="0" stopColor="#563896" />
            <stop offset=".2" stopColor="#1a6fb8" />
            <stop offset=".42" stopColor="#1fb0cc" />
            <stop offset=".62" stopColor="#97c46b" />
            <stop offset=".82" stopColor="#e4cf3a" />
            <stop offset="1" stopColor="#e0872a" />
          </linearGradient>
        </defs>
      </svg>

      {/* title bar */}
      <div className="relative flex h-[50px] shrink-0 items-center justify-center border-b-2 border-[#d0d0d0] bg-[#efefef]">
        <div className="absolute left-[12px] top-[8px] flex gap-[17px]">
          <span className="h-[24px] w-[24px] rounded-full bg-[#f46a5e]" />
          <span className="h-[24px] w-[24px] rounded-full bg-[#f6be4f]" />
          <span className="h-[24px] w-[24px] rounded-full bg-[#62c554]" />
        </div>
        <span className="-translate-y-[5px] text-[27px] font-bold text-[#555]">ParaView 5.13.2</span>
      </div>

      {/* main toolbar */}
      <div className={`flex h-[86px] shrink-0 items-center ${rowGrad}`}>
        <Dots className="ml-[8px] mr-[4px]" />
        {["folderUp", "folderDown", "save", "connectArrow", "pvLogo"].map((n) => <Tool key={n} n={n} />)}
        <Line w="w-[11px]" />
        {["serverOn", "serverOff", "recover"].map((n) => <Tool key={n} n={n} />)}
        <Line w="w-[13px]" />
        {["undo", "redo"].map((n) => <Tool key={n} n={n} />)}
        <Line w="w-[13px]" />
        {["output", "colorPick", "palette"].map((n) => <Tool key={n} n={n} />)}
        <Dots className="ml-[13px] mr-[5px]" />
        {["first", "prevBar", "prev", "play"].map((n) => <Tool key={n} n={n} />)}
        <Chevrons className="ml-[77px]" />
        <Dots className="ml-[17px]" />
        <span className="ml-[7px] text-[27px]">Time:</span>
        <div className="ml-[9px] flex h-[40px] w-[170px] shrink-0 items-center rounded-[8px] bg-white pl-[2px] pr-[3px] shadow-[0_1px_2px_rgba(0,0,0,.4)]">
          <div className="h-[32px] w-[128px] border-b-2 border-[#c8c8c8] pl-[3px] text-[27px] leading-[32px]">10</div>
          <div className="ml-[5px]"><Stepper down /></div>
        </div>
        <div className="ml-[12px] h-[34px] w-[93px] shrink-0 border-b-2 border-[#c8c8c8] bg-white pl-[3px] text-[27px] leading-[32px]">10</div>
        <div className="flex h-[40px] w-[26px] shrink-0 flex-col items-center justify-center rounded-[8px] bg-white shadow-[0_1px_2px_rgba(0,0,0,.4)]">
          <svg width="16" height="30" viewBox="0 0 16 30">
            <path d="M3 9l5-5 5 5M3 21l5 5 5-5" fill="none" stroke="#333" strokeWidth="2" />
          </svg>
        </div>
        <span className="ml-[7px] whitespace-nowrap text-[26px]">max is 10</span>
        <Dots className="ml-[17px]" />
        <div className="ml-[17px] shrink-0"><Ic n="shot" s={62} /></div>
        <Chevrons className="ml-[18px]" />
      </div>

      {/* color toolbar */}
      <div className={`flex h-[88px] shrink-0 items-center border-t border-t-white ${rowGrad}`}>
        <Dots className="ml-[8px] mr-[4px]" />
        <Tool n="cbar" active />
        {["cedit", "cunlink", "range", "rangeC", "rangeT", "rangeE"].map((n) => <Tool key={n} n={n} />)}
        <div className="ml-[12px]">
          <Combo w="w-[274px]"><WindLabel /></Combo>
        </div>
        <div className="ml-[22px]">
          <Combo w="w-[156px]" disabled />
        </div>
        <Dots className="ml-[29px] mr-[16px]" />
        <Combo w="w-[295px]"><span className="ml-[16px]">Slice</span></Combo>
        <Dots className="ml-[28px] mr-[5px]" />
        {["rs1", "rs2", "rs3", "rs4", "zoomBox", "axes"].map((n) => <Tool key={n} n={n} />)}
        <Chevrons className="ml-[10px]" />
        <Dots className="ml-[18px] mr-[4px]" />
        <Tool n="axesEye" active w="w-[85px]" />
        <Chevrons className="ml-[7px]" />
        <Dots className="ml-[19px] mr-[4px]" />
        <Tool n="bulb" active />
        <Dots className="ml-[14px]" />
      </div>

      {/* filters toolbar */}
      <div className={`flex h-[86px] shrink-0 items-center border-t border-t-white pt-[3px] ${rowGrad}`}>
        <Dots className="ml-[8px]" />
        {["calc", "contour", "clip", "slice", "extract", "threshold", "glyph", "stream", "warp", "group", "ungroup"].map((n) => <Tool key={n} n={n} w="w-[92px]" />)}
        <Dots className="ml-[10px]" />
        {["probe", "selectData", "histo", "timePlot", "plotLine", "timeSel", "find", "braces"].map((n) => <Tool key={n} n={n} w="w-[92px]" />)}
        <Dots className="ml-[9px] mr-[1px]" />
        {["ruler", "protractor"].map((n) => <Tool key={n} n={n} w="w-[92px]" />)}
      </div>

      <div className="flex min-h-0 flex-1">
        {/* left column */}
        <div className="flex w-[700px] shrink-0 flex-col border-r-2 border-[#a5a5a5]">
          <DockHeader title="Pipeline Browser" h="h-[47px]" />
          <div className="h-[349px] shrink-0 border-b-[3px] border-[#a5a5a5] bg-white pt-[7px] text-[28px] text-[#222]">
            <div className="flex h-[46px] items-center pb-[6px] pl-[56px]">
              <div className="relative">
                <span className="absolute -top-[11px] left-[7px] h-[9px] w-[2px] bg-[#999]" />
                <span className="absolute -bottom-[8px] left-[7px] h-[7px] w-[2px] bg-[#999]" />
                <svg width="16" height="28" viewBox="0 0 16 28" className="block">
                  <rect x="1" y="1" width="14" height="26" rx="1" fill="#999" stroke="#111" strokeWidth="2" />
                  <rect x="3" y="4" width="10" height="4" fill="#111" />
                  <rect x="3" y="14" width="10" height="11" fill="#777" />
                </svg>
              </div>
              <span className="ml-[18px] translate-y-[1px]">builtin:</span>
            </div>
            <div className="flex h-[36px] items-center pl-[9px]">
              <svg width="30" height="22" viewBox="0 0 30 22">
                <path d="M1 11C8 1 22 1 29 11 22 21 8 21 1 11z" fill="#fff" stroke="#555" strokeWidth="1.2" />
                <circle cx="15" cy="11" r="7" fill="#2592d6" />
                <circle cx="15" cy="11" r="3.5" fill="#111" />
              </svg>
              <div className="ml-[7px] flex h-[36px] w-[244px] items-center bg-[#b3d7ff] pl-[2px]">
                <svg width="32" height="32" viewBox="0 0 32 32">
                  <path d="M2 8 14 2l16 5v19l-15 5-13-6z" fill="#6bb553" stroke="#5c7a48" />
                  <path d="M14 10v21L2 25V8z" fill="#4d8a3a" />
                  <rect x="15" y="11" width="13" height="17" fill="#7fd06a" />
                </svg>
                <span className="ml-[10px] translate-y-[1px]">frame_001.vtk*</span>
              </div>
            </div>
          </div>

          <div className="flex h-[43px] shrink-0 items-end justify-center bg-[linear-gradient(to_bottom,#e4e4e4_0,#e4e4e4_44%,#ededed_44%,#ededed_100%)] pr-[2px]">
            <div className="flex h-[41px] w-[348px] text-[28px]">
              <div className="flex w-[168px] items-center justify-center rounded-l-[8px] bg-gradient-to-b from-[#2595ff] to-[#0a78ff] text-white">Properties</div>
              <div className="flex flex-1 items-center justify-center rounded-r-[8px] bg-white text-[#222] shadow-[0_1px_2px_rgba(0,0,0,.3)]">Information</div>
            </div>
          </div>

          <DockHeader title="Properties" h="h-[44px]" />

          <div className="flex flex-1 flex-col bg-[#ececec]">
            <div className="mt-[33px] flex gap-[8px] pl-[34px]">
              <Btn w="w-[166px]" disabled className="gap-[15px] text-[28px] opacity-90">
                <span className="opacity-50"><Ic n="output" s={30} /></span>Apply
              </Btn>
              <Btn w="w-[166px]" disabled className="gap-[15px] text-[28px]">
                <svg width="30" height="30" viewBox="0 0 30 30">
                  <circle cx="15" cy="15" r="12" fill="none" stroke="#ee9999" strokeWidth="4" />
                  <path d="M7 7l16 16" stroke="#ee9999" strokeWidth="4" />
                </svg>
                Reset
              </Btn>
              <Btn w="w-[174px]" className="gap-[18px] text-[28px]">
                <svg width="24" height="26" viewBox="0 0 24 26">
                  <path d="M3 6l4-4 5 5 5-5 4 4-5 7 5 7-4 4-5-5-5 5-4-4 5-7z" fill="#ed1c24" />
                </svg>
                Delete
              </Btn>
              <Btn w="w-[96px]">
                <span className="text-[32px] text-[#a0cc84] [-webkit-text-stroke:.5px_#78785f]">?</span>
              </Btn>
            </div>

            <div className="mt-[42px] flex items-center pl-[21px]">
              <div className="flex h-[40px] w-[595px] items-center border-b-2 border-[#b8b8b8] bg-white pl-[3px] pt-[3px] text-[27px] text-[#7c7c7c]">Search ...(use Esc to clear text)</div>
              <div className="ml-[6px] flex h-[52px] w-[51px] items-center justify-center border-2 border-[#b8b8b8]">
                <svg width="30" height="30" viewBox="0 0 24 24" fill="none" stroke="#8a8a8a" strokeWidth="1.6">
                  <circle cx="12" cy="12" r="3.5" />
                  <path d="M12 2l1.8 3 3.4-1 .6 3.5 3.4.9-1.4 3.2 2.2 2.7-2.9 1.9.2 3.5-3.5-.1-1.7 3-2.9-2-3 1.9-1.6-3.1-3.5.1.3-3.5-2.9-2 2.2-2.6L1.2 8.5 4.6 7.6 5.2 4l3.4 1z" />
                </svg>
              </div>
            </div>

            <div className="ml-[20px] mt-[19px] flex h-[509px] w-[653px] flex-col">
              <div className="flex h-[483px]">
                <div className="w-[625px] overflow-hidden pt-[9px]">
                  <Section title="Properties (frame_001.vtk*)" size="text-[28px]" />
                  <div className="h-[66px]" />
                  <Section title="Display (UniformGridRepresentation)" size="text-[26.8px]" />
                  <div className="mt-[47px] flex h-[40px] items-center">
                    <span className="w-[204px] shrink-0 translate-y-[2px] text-[27px]">Representation</span>
                    <div className="flex h-[40px] w-[500px] shrink-0 items-center rounded-[8px] bg-white pl-[16px] text-[28px] shadow-[0_1px_2px_rgba(0,0,0,.3)]">Slice</div>
                  </div>
                  <div className="mt-[30px] h-[36px] w-[700px] border-b-2 border-[#b4b4b4] text-[26px] font-bold leading-[34px] text-black">Coloring</div>
                  <div className="mt-[20px] flex pl-[24px]">
                    <Combo w="w-[374px]"><WindLabel /></Combo>
                    <div className="ml-[22px] h-[40px] w-[300px] shrink-0 rounded-[8px] bg-[#f2f2f2]" />
                  </div>
                  <div className="mt-[25px] flex h-[44px] gap-[12px] pl-[14px]">
                    <Btn w="w-[142px]" className="gap-[15px]"><Ic n="cedit" s={30} />Edit</Btn>
                    <Btn w="w-[96px]"><Ic n="cunlink" s={30} /></Btn>
                    <Btn w="w-[96px]"><Ic n="range" s={30} /></Btn>
                    <Btn w="w-[96px]"><Ic n="rangeC" s={30} /></Btn>
                    <Btn w="w-[96px]"><Ic n="rangeT" s={30} /></Btn>
                    <Btn w="w-[96px]" />
                  </div>
                </div>
                <div className="w-[27px] shrink-0 bg-[#f9f9f9] pl-[7px] pt-[7px]">
                  <div className="h-[99px] w-[16px] rounded-full bg-[#7f7f7f]" />
                </div>
              </div>
              <div className="flex h-[26px]">
                <div className="w-[625px] bg-[#f9f9f9] pl-[6px] pt-[6px]">
                  <div className="h-[15px] w-[411px] rounded-full bg-[#7f7f7f]" />
                </div>
              </div>
            </div>
          </div>
        </div>

        {/* right column */}
        <div className="flex min-w-0 flex-1 flex-col">
          <div className="h-[54px] shrink-0 bg-[#ececec] pt-[20px]">
            <div className="flex h-[34px] justify-center rounded-tl-[10px] border-t border-[#d4d4d4] bg-[#e6e6e6]">
              <div className="-mt-[17px] flex h-[40px] shadow-[0_1px_2px_rgba(0,0,0,.3)]">
                <div className="flex w-[256px] items-center rounded-l-[6px] bg-gradient-to-b from-[#2595ff] to-[#0a78ff] pl-[3px] text-white">
                  <div className="h-[32px] w-[32px] border-x-[3px] border-b-[3px] border-t-[9px] border-[#333] bg-[#1a80f0]" />
                  <span className="ml-[30px] w-[150px] translate-y-[1px] text-[27px]">Layout #1</span>
                  <svg width="28" height="28" viewBox="0 0 28 28">
                    <circle cx="14" cy="14" r="14" fill="#4a4a4a" />
                    <path d="M9 9l10 10M19 9 9 19" stroke="#fff" strokeWidth="4" />
                  </svg>
                </div>
                <div className="flex w-[58px] items-center justify-center rounded-r-[6px] bg-white pl-[3px] text-[27px]">+</div>
              </div>
            </div>
          </div>

          <div className="flex h-[58px] shrink-0 bg-[#e8e8e8] pl-[5px]">
            <div className="flex h-full w-[1163px] shrink-0 items-center border-b-[3px] border-[#b4b4b4] bg-gradient-to-b from-[#efefef] to-[#c8c8c8]">
              {["camUndo", "camRedo"].map((n) => <Tool key={n} n={n} w="w-[56px]" size={40} />)}
              <Line w="w-[12px]" />
              <Tool n="camBox" w="w-[56px]" size={40} />
              <Line w="w-[12px]" />
              {["twoD", "camPen"].map((n) => <Tool key={n} n={n} w="w-[56px]" size={40} />)}
              <Line w="w-[12px]" />
              {["addSel", "subSel", "addSubSel"].map((n) => <Tool key={n} n={n} w="w-[56px]" size={40} />)}
              <Line w="w-[14px]" />
              <Tool n="selCell" w="w-[56px]" size={40} />
              <Tool n="selPoint" w="w-[56px]" size={40} active />
              {["frust", "frustPts", "polyCell", "polyPts", "interactive", "frustBlock", "block", "pointHover", "cellHover"].map((n) => <Tool key={n} n={n} w="w-[56px]" size={40} />)}
              <Chevrons className="ml-[13px]" />
            </div>
            <span className="ml-[3px] self-center border-b-[3px] border-black text-[27px] font-bold leading-[30px] text-black">RenderView1</span>
            <div className="ml-auto flex h-full">
              <ViewBtn><rect x="6" y="6" width="24" height="26" fill="#ccd4ea" stroke="#aaa" strokeWidth="2" /><path d="M18 6v26" stroke="#777" strokeWidth="2" /></ViewBtn>
              <ViewBtn><rect x="6" y="6" width="24" height="26" fill="#ccd4ea" stroke="#aaa" strokeWidth="2" /><path d="M6 19h24" stroke="#777" strokeWidth="2" /></ViewBtn>
              <ViewBtn><rect x="5" y="4" width="26" height="32" fill="#f6f6f6" stroke="#333" strokeWidth="3" /><rect x="5" y="4" width="26" height="9" fill="#333" /></ViewBtn>
              <ViewBtn><circle cx="18" cy="19" r="13" fill="#4a4a4a" /><path d="M13 14l10 10M23 14 13 24" stroke="#fff" strokeWidth="3.5" /></ViewBtn>
            </div>
          </div>

          <div className="ml-[5px] mr-[1px] h-[751px] shrink-0 border-[3px] border-[#0068da]">
            <div className="relative flex h-full items-center justify-center border-[3px] border-white bg-[#52576e]">
              <SliceImage />
              <Axes />
              <ScalarBar />
            </div>
          </div>

          <div className="h-[7px] shrink-0 border-b-[3px] border-[#a5a5a5] bg-[#e4e4e4]" />
          <DockHeader title="Output Messages" h="h-[46px]" left="pl-[4px]" titleClass="pl-[6px]" />

          <div className="flex flex-1 flex-col bg-[#ececec] pl-[24px] pr-[19px] pt-[24px]">
            <div className="h-[148px] border-x border-b-2 border-t-2 border-x-[#c0c0c0] border-t-[#999] border-b-[#b4b4b4]">
              <div className="h-[36px] bg-white" />
              <div className="h-[36px] bg-[#f4f5f5]" />
              <div className="h-[36px] bg-white" />
              <div className="h-[36px] bg-[#f4f5f5]" />
            </div>
            <div className="mt-[38px] flex h-[40px] items-center pl-[6px] text-[27px]">
              <span className="h-[28px] w-[25px] rounded-[5px] bg-white shadow-[0_0_2px_rgba(0,0,0,.4)]" />
              <span className="ml-[9px]">Show full messages</span>
              <span className="ml-[18px] flex h-[28px] w-[26px] items-center justify-center rounded-[5px] bg-[#f2f2f2] shadow-[0_0_2px_rgba(0,0,0,.3)]">
                <svg width="16" height="20" viewBox="0 0 16 20"><path d="M2 11l4 6 7-14" fill="none" stroke="#b0b0b0" strokeWidth="2.5" /></svg>
              </span>
              <span className="ml-[8px] text-[#a8a8a8]">Always open for new messages</span>
              <div className="ml-auto flex gap-[32px]">
                <Btn w="w-[276px]">Copy to Clipboard</Btn>
                <Btn w="w-[218px]">Save to File...</Btn>
                <Btn w="w-[120px]">Clear</Btn>
              </div>
              <div className="w-[13px] shrink-0" />
            </div>
          </div>
        </div>
      </div>

      {/* status bar */}
      <div className="flex h-[48px] shrink-0 border-t-2 border-[#8a8a8a] bg-gradient-to-b from-[#ececec] to-[#c0c0c0] pl-[756px] pt-[6px] text-[27px]">
        <div className="flex w-[42px] items-center justify-center border-t-2 border-[#c4c4c4] bg-[#e6e6e6]">
          <svg width="16" height="18" viewBox="0 0 24 26">
            <path d="M3 6l4-4 5 5 5-5 4 4-5 7 5 7-4 4-5-5-5 5-4-4 5-7z" fill="#ef7f85" />
          </svg>
        </div>
        <div className="ml-[6px] w-[705px] border-t-[3px] border-r-2 border-t-[#bcbcbc] border-r-white" />
        <div className="ml-[14px] flex w-[406px] items-center whitespace-nowrap rounded-tl-[4px] border-t-[3px] border-[#7f9a80] bg-gradient-to-b from-[#e4fddb] to-[#bde2b8] pl-[57px] pt-[3px]">StarblodeMacBook-Pro.local:</div>
        <div className="flex w-[347px] items-center whitespace-nowrap border-t-[3px] border-[#8e8e8e] bg-white pl-[13px] pt-[3px] text-[27.5px]">4.3 GiB/8.0 GiB 54.2%</div>
      </div>
    </div>
  );
}

function ViewBtn({ children }: { children: ReactNode }) {
  return (
    <div className="mr-[2px] flex h-full w-[56px] items-center justify-center border-2 border-[#b0b0b0] bg-gradient-to-b from-[#e8e8e8] to-[#f8f8f8] last:mr-0">
      <svg width="36" height="40" viewBox="0 0 36 40">{children}</svg>
    </div>
  );
}
